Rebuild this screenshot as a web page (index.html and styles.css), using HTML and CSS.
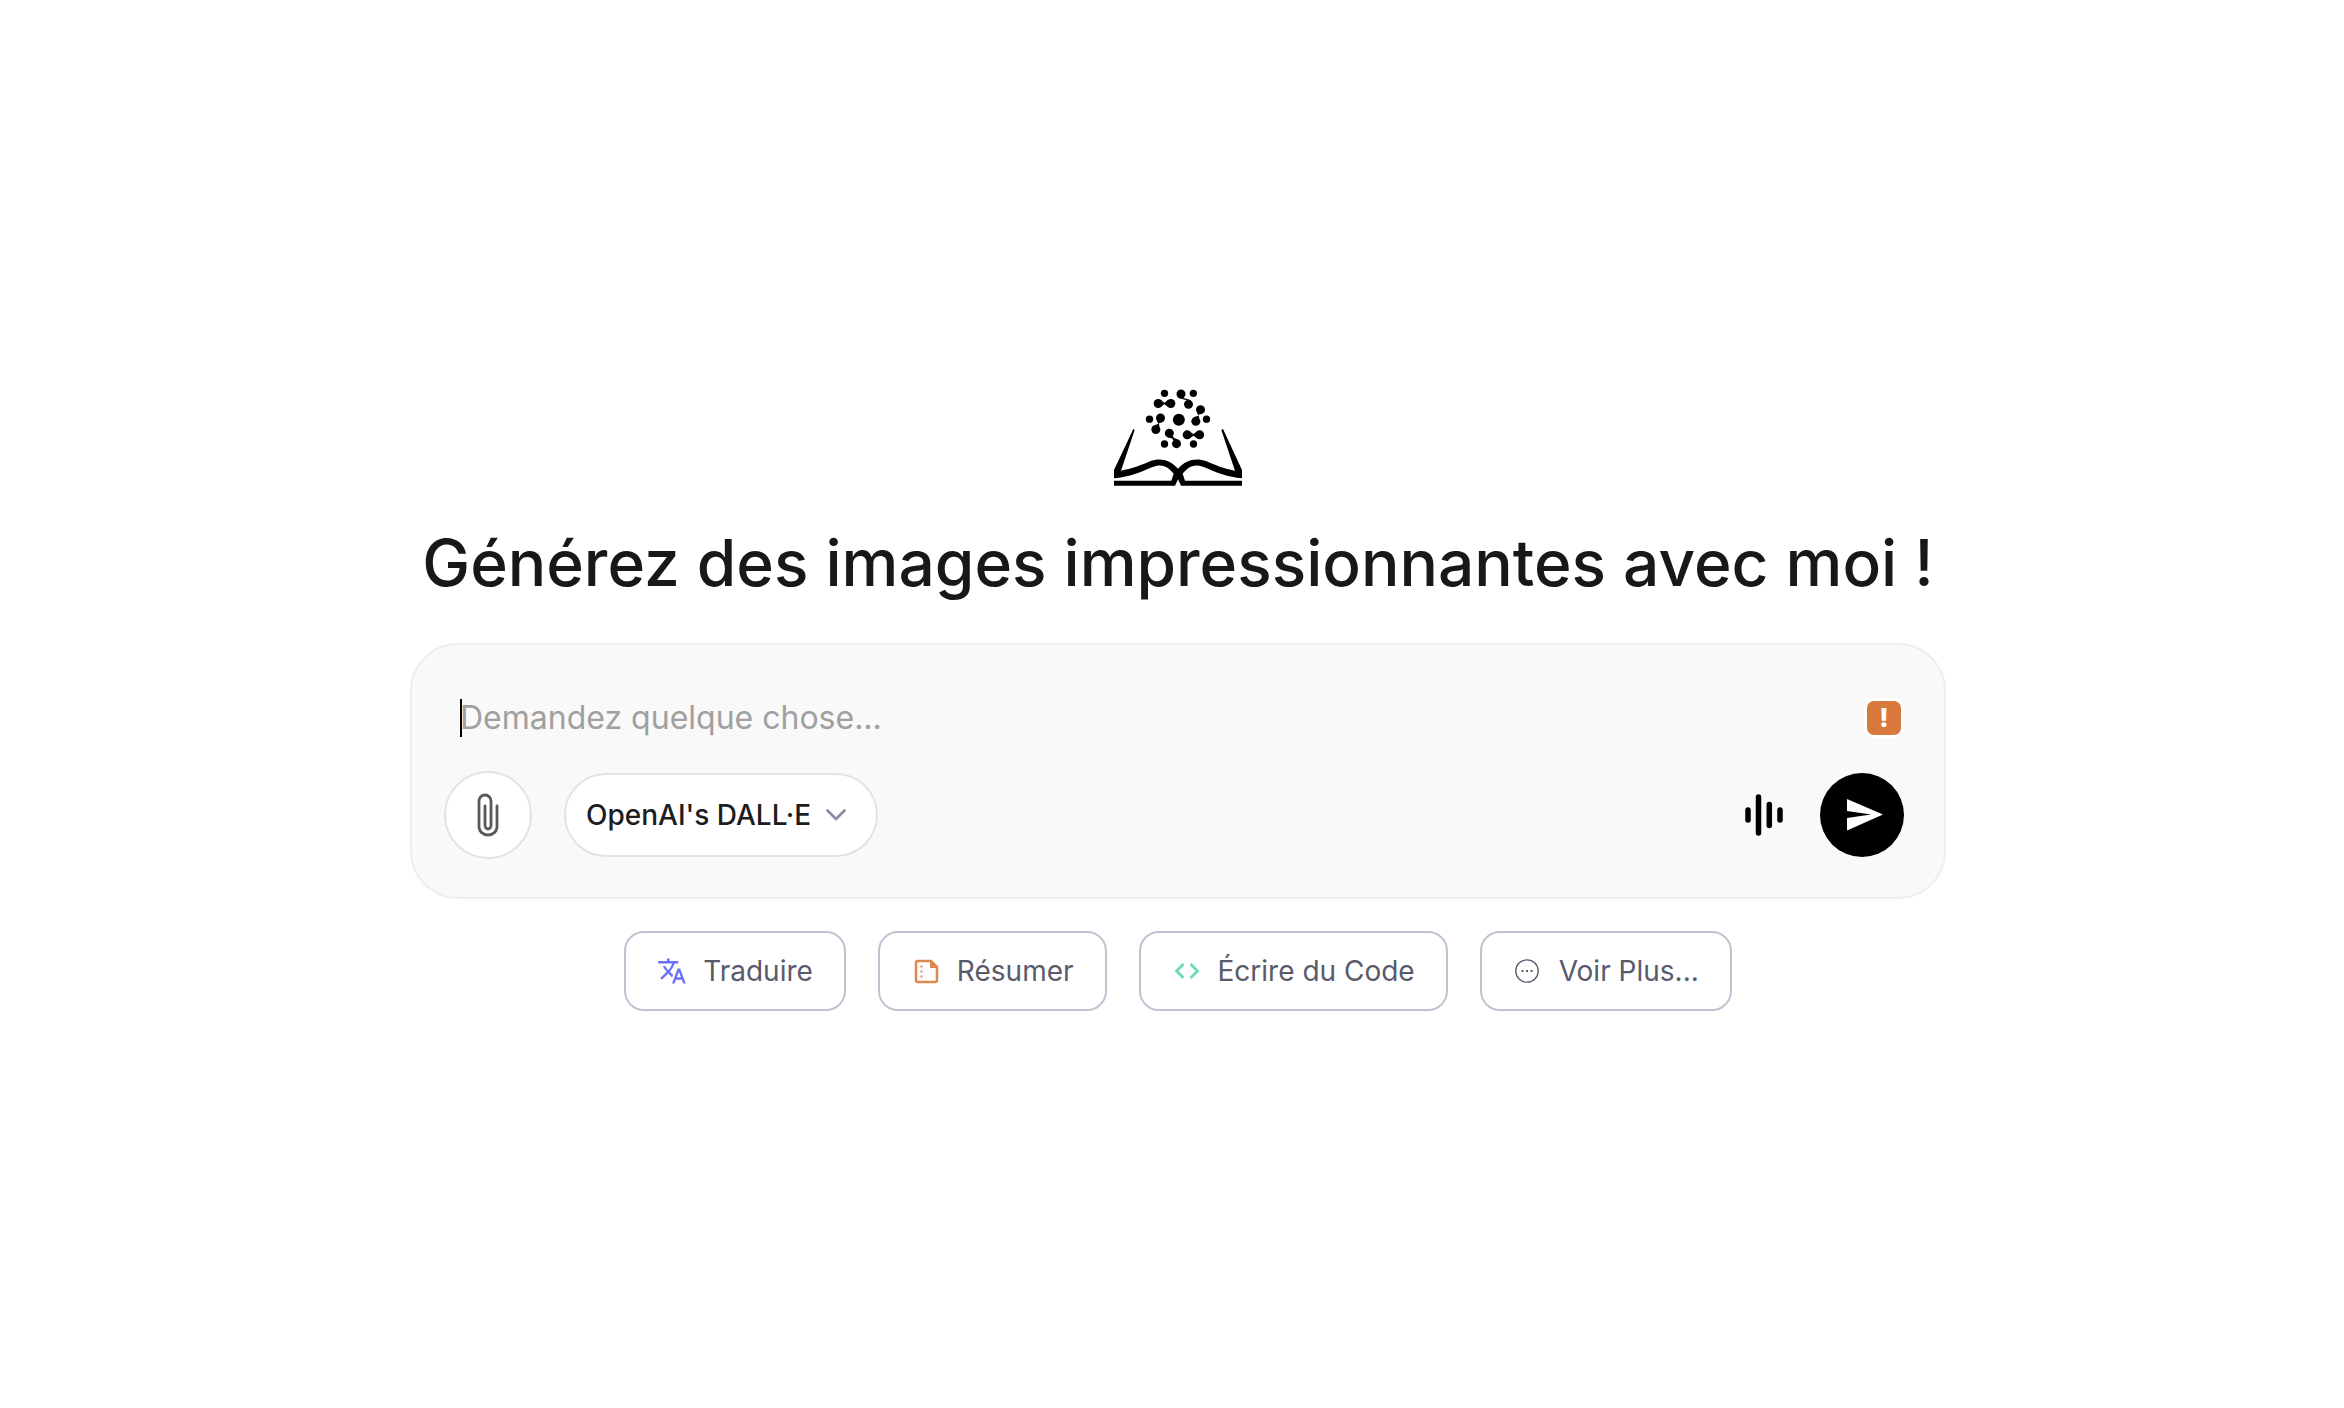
FILE: index.html
```html
<!DOCTYPE html>
<html lang="fr">
<head>
    <meta charset="UTF-8">
    <meta name="viewport" content="width=device-width, initial-scale=1.0">
    <link rel="stylesheet" href="styles.css">
    <title>Assistant</title>
</head>
<body>
    <main class="home">
        <svg class="logo" viewBox="42 40 384 292" aria-hidden="true">
            <!-- molecules -->
            <circle cx="236.500" cy="132.500" r="18"/>
            <g>
                <circle cx="193.500" cy="53" r="11"/>
                <circle cx="280" cy="53" r="11"/>
                <circle cx="148.500" cy="130.500" r="11"/>
                <circle cx="319.500" cy="130.500" r="11"/>
                <circle cx="193.500" cy="205" r="11"/>
                <circle cx="280.500" cy="205" r="11"/>
            </g>
            <g>
                <circle cx="243" cy="55" r="13.500"/><circle cx="265.500" cy="86" r="13.500"/>
                <circle cx="174.500" cy="83.500" r="13.500"/><circle cx="212.500" cy="83.500" r="13.500"/>
                <circle cx="301.500" cy="102" r="13.500"/><circle cx="287.500" cy="137" r="13.500"/>
                <circle cx="181.500" cy="127" r="13.500"/><circle cx="167.500" cy="161.500" r="13.500"/>
                <circle cx="208" cy="172.500" r="13.500"/><circle cx="229.500" cy="204" r="13.500"/>
                <circle cx="261.500" cy="177.500" r="13.500"/><circle cx="299" cy="177.500" r="13.500"/>
            </g>
            <path d="M236 67L254 68L273 74L254 72Z M180 72L193 81L206 72V95L193 86L180 95Z M290 108L295 120L284 124L298 128L295 118L308 112Z M170 133L175 144L164 149L178 152L177 143L188 138Z M202 184L218 189L219 194L236 192L222 187L217 178Z M267 166L280 175L293 166V189L280 180L267 189Z"/>
            <!-- open book -->
            <path d="M100 160L104 163L63 285C95 280 125 268 150 257C180 245 210 252 234 279C258 252 288 245 320 257C345 268 372 280 405 285L364 163L369 160L426 283V308C385 305 347 290 313 275C285 263 267 271 248 294L255 315H426V330H243L234 311L225 330H42V315H214L221 294C202 271 184 263 156 275C121 290 85 305 42 308V283Z"/>
        </svg>

        <h1 class="title">Générez des images impressionnantes avec moi !</h1>

        <form class="prompt">
            <div class="prompt-row">
                <span class="caret"></span>
                <input class="prompt-input" type="text" aria-label="Message" placeholder="Demandez quelque chose...">
                <span class="badge">!</span>
            </div>
            <div class="tools">
                <button class="attach" type="button" aria-label="Joindre un fichier">
                    <svg width="22" height="44" viewBox="0 0 22 44" fill="none" stroke="#58595b" stroke-width="2.800" stroke-linecap="round">
                        <path d="M20 13V34A9 8 0 0 1 2 34V8A6 6 0 0 1 14 8V32A3 4 0 0 1 8 32V13"/>
                    </svg>
                </button>
                <div class="model">
                    <select class="model-select" aria-label="Modèle">
                        <option>OpenAI's DALL·E</option>
                    </select>
                    <svg class="chevron" width="20" height="12" viewBox="0 0 20 12" fill="none" stroke="#8f8ca3" stroke-width="2.800" stroke-linecap="round" stroke-linejoin="round">
                        <path d="M1.500 1.500L10 10L18.500 1.500"/>
                    </svg>
                </div>
                <button class="voice" type="button" aria-label="Dicter">
                    <svg width="38" height="42" viewBox="0 0 38 42" fill="none" stroke="#000" stroke-width="5.500" stroke-linecap="round">
                        <path d="M3 16V26M13.500 3V39M24.300 10.500V31.500M35 16V26"/>
                    </svg>
                </button>
                <button class="send" type="submit" aria-label="Envoyer">
                    <svg width="36" height="32" viewBox="0 0 36 32" fill="#fff">
                        <path d="M0 0L36 15.500L0 31.500V19L24 15.500L0 12Z"/>
                    </svg>
                </button>
            </div>
        </form>

        <div class="chips">
            <button class="chip" type="button">
                <svg class="chip-icon" viewBox="0 0 24 24" fill="#6b70fa">
                    <path d="M12.870 15.070l-2.540-2.510.030-.030A17.520 17.520 0 0 0 14.070 6H17V4h-7V2H8v2H1v2h11.170C11.500 7.920 10.440 9.750 9 11.350 8.070 10.320 7.300 9.190 6.690 8h-2c.730 1.630 1.730 3.170 2.980 4.560l-5.090 5.020L4 19l5-5 3.110 3.110.760-2.040zM18.500 10h-2L12 22h2l1.120-3h4.750L21 22h2l-4.500-12zm-2.620 7l1.620-4.330L19.120 17h-3.240z"/>
                </svg>
                Traduire
            </button>
            <button class="chip" type="button">
                <svg class="chip-icon" viewBox="0 0 30 30">
                    <path d="M7 5H20L26 11V24Q26 26 24 26H7Q5 26 5 24V7Q5 5 7 5Z" fill="none" stroke="#dc8850" stroke-width="2.500"/>
                    <path d="M19 4.500V12H26.500Z M9.500 9.500h2v2h-2zM9.500 14.500h2v2h-2zM9.500 19.500h2v2h-2z" fill="#dc8850"/>
                </svg>
                Résumer
            </button>
            <button class="chip" type="button">
                <svg class="chip-icon" viewBox="0 0 30 30" fill="none" stroke="#6bdcae" stroke-width="2.800">
                    <path d="M11.500 8L4.500 15L11.500 22M18.500 8L25.500 15L18.500 22"/>
                </svg>
                Écrire du Code
            </button>
            <button class="chip" type="button">
                <svg class="chip-icon" viewBox="0 0 30 30">
                    <circle cx="14" cy="15" r="11.200" fill="none" stroke="#595b6b" stroke-width="1.300"/>
                    <path d="M8.500 14h2v2h-2zM13 14h2v2h-2zM17.500 14h2v2h-2z" fill="#595b6b"/>
                </svg>
                Voir Plus...
            </button>
        </div>
    </main>
</body>
</html>
```
FILE: styles.css
```css
* {
    box-sizing: border-box;
}

body {
    margin: 0;
    background-color: #fff;
    font-family: Inter, "Liberation Sans", sans-serif;
}

button,
input,
select {
    font-family: inherit;
    margin: 0;
    padding: 0;
    border: none;
    background: none;
}

button,
select {
    cursor: pointer;
}

.home {
    min-height: 100vh;
    padding: 0 0 8px 12px;
    display: flex;
    flex-direction: column;
    align-items: center;
    justify-content: center;
}

.logo {
    width: 128px;
    margin-bottom: 36px;
}

.title {
    margin: 0 0 40px;
    font-size: 64px;
    font-weight: 500;
    line-height: 80px;
    text-align: center;
    color: #17181a;
}

.prompt {
    width: 100%;
    max-width: 1536px;
    padding: 40px 40px 38px 32px;
    border: 2px solid #eee;
    border-radius: 48px;
    background-color: #f9f9f9;
}

.prompt-row {
    display: flex;
    align-items: center;
    height: 66px;
    margin-bottom: 20px;
    padding-left: 16px;
}

.caret {
    width: 2px;
    height: 38px;
    margin-right: -2px;
    background-color: #000;
}

.prompt-input {
    flex: 1;
    min-width: 0;
    font-size: 32px;
    color: #17181a;
    outline: none;
}

.prompt-input::placeholder {
    color: #a0a0a0;
    opacity: 1;
}

.badge {
    width: 40px;
    height: 40px;
    border: 3px solid #fff;
    border-radius: 10px;
    background-color: #d9793d;
    color: #fff;
    font-size: 26px;
    font-weight: 800;
    line-height: 34px;
    text-align: center;
}

.tools {
    display: flex;
    align-items: center;
}

.attach,
.voice,
.send {
    display: flex;
    align-items: center;
    justify-content: center;
}

.attach {
    width: 88px;
    height: 88px;
    border: 2px solid #e3e3e3;
    border-radius: 50%;
    background-color: #fff;
}

.model {
    position: relative;
    margin-left: 32px;
}

.model-select {
    appearance: none;
    height: 84px;
    padding: 0 64px 0 20px;
    border: 2px solid #e3e3e3;
    border-radius: 42px;
    background-color: #fff;
    font-size: 28px;
    font-weight: 500;
    color: #1c1d1f;
}

.chevron {
    position: absolute;
    top: 36px;
    right: 32px;
    pointer-events: none;
}

.voice {
    margin-left: auto;
}

.send {
    width: 84px;
    height: 84px;
    margin-left: 37px;
    padding-left: 6px;
    border-radius: 50%;
    background-color: #000;
}

.chips {
    display: flex;
    flex-wrap: wrap;
    justify-content: center;
    gap: 32px;
    margin-top: 32px;
}

.chip {
    display: flex;
    align-items: center;
    gap: 16px;
    height: 80px;
    padding: 0 31px;
    border: 2px solid #c4c1d2;
    border-radius: 20px;
    background-color: #fff;
    font-size: 28px;
    color: #595b6b;
}

.chip-icon {
    width: 30px;
    height: 30px;
}
```
